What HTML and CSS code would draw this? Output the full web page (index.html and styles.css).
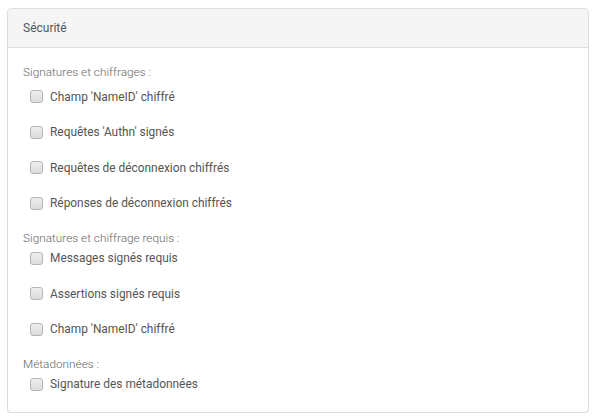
FILE: index.html
```html
<!DOCTYPE html>
<html lang="fr">
<head>
<meta charset="utf-8">
<title>Sécurité</title>
<link rel="stylesheet" href="styles.css">
</head>
<body>
<div class="panel">
  <div class="panel-heading">Sécurité</div>
  <div class="panel-body">
    <div class="group group-first">
      <div class="group-label">Signatures et chiffrages :</div>
      <div class="items">
        <label class="item"><input type="checkbox" class="cb"><span>Champ 'NameID' chiffré</span></label>
        <label class="item"><input type="checkbox" class="cb"><span>Requêtes 'Authn' signés</span></label>
        <label class="item"><input type="checkbox" class="cb"><span>Requêtes de déconnexion chiffrés</span></label>
        <label class="item"><input type="checkbox" class="cb"><span>Réponses de déconnexion chiffrés</span></label>
      </div>
    </div>
    <div class="group">
      <div class="group-label">Signatures et chiffrage requis :</div>
      <div class="items">
        <label class="item"><input type="checkbox" class="cb"><span>Messages signés requis</span></label>
        <label class="item"><input type="checkbox" class="cb"><span>Assertions signés requis</span></label>
        <label class="item"><input type="checkbox" class="cb"><span>Champ 'NameID' chiffré</span></label>
      </div>
    </div>
    <div class="group">
      <div class="group-label">Métadonnées :</div>
      <div class="items">
        <label class="item"><input type="checkbox" class="cb"><span>Signature des métadonnées</span></label>
      </div>
    </div>
  </div>
</div>
</body>
</html>
```

FILE: styles.css
```css
html, body {
  margin: 0;
  padding: 0;
  background: #ffffff;
}
body {
  padding: 8px 0 0 7px;
  font-family: Roboto, "Liberation Sans", Arial, sans-serif;
  font-size: 12px;
  font-weight: 300;
  line-height: 18px;
}
.panel {
  width: 580px;
  height: 403px;
  border: 1px solid #dddddd;
  border-radius: 4px;
  background: #ffffff;
  box-shadow: 0 1px 1px rgba(0,0,0,0.05);
  overflow: hidden;
  display: flex;
  flex-direction: column;
}
.panel-heading {
  height: 38px;
  line-height: 38px;
  padding: 0 15px;
  background: #f5f5f5;
  border-bottom: 1px solid #dddddd;
  color: #555555;
  font-weight: 400;
  font-size: 12px;
}
.panel-body {
  padding: 15px 15px 0 15px;
  display: flex;
  flex-direction: column;
  gap: 17px;
}
.group {
  display: flex;
  flex-direction: column;
  gap: 2px;
}
.group-first {
  gap: 6.5px;
}
.group-label {
  color: #666666;
  font-size: 11.8px;
}
.items {
  display: flex;
  flex-direction: column;
  gap: 17.5px;
  padding-left: 7px;
}
.item {
  display: flex;
  align-items: center;
  gap: 7px;
  color: #555555;
  font-weight: 400;
  font-size: 11.9px;
}
.cb {
  appearance: none;
  -webkit-appearance: none;
  margin: 0;
  width: 13px;
  height: 13px;
  border: 1px solid #b4b4b4;
  border-radius: 3px;
  background: linear-gradient(#eeeeee, #dcdcdc);
  flex: none;
}
```
